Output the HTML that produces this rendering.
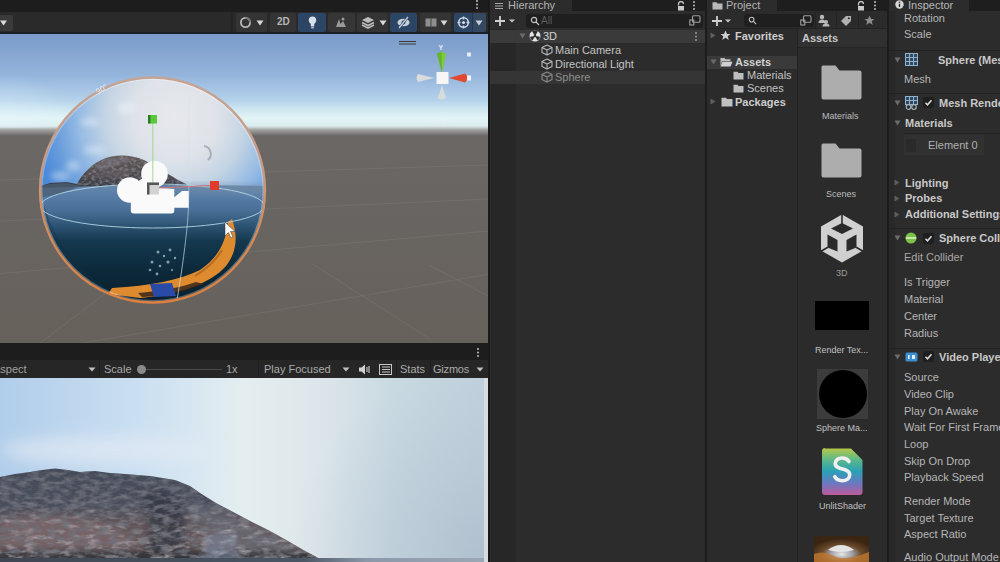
<!DOCTYPE html>
<html><head><meta charset="utf-8">
<style>
*{margin:0;padding:0;box-sizing:border-box}
html,body{width:1000px;height:562px;overflow:hidden;background:#1e1e1e;font-family:"Liberation Sans",sans-serif;color:#c2c2c2}
.a{position:absolute}
.t{position:absolute;white-space:nowrap;font-size:11px;line-height:12px}
.b{font-weight:bold}
</style></head><body>
<!-- ===== SCENE VIEW ===== -->
<div class="a" style="left:0;top:0;width:488px;height:12px;background:#1d1d1d"></div>
<div class="a" style="left:0;top:12px;width:488px;height:21px;background:#2a2a2a"></div>
<div class="a" style="left:0;top:32px;width:488px;height:2px;background:#1b2028"></div>
<svg class="a" style="left:0;top:34px" width="488" height="309" viewBox="0 34 488 309">
<defs>
<linearGradient id="sky" x1="0" y1="34" x2="0" y2="140" gradientUnits="userSpaceOnUse">
<stop offset="0" stop-color="#7a9ac8"/>
<stop offset="0.387" stop-color="#94b4dc"/>
<stop offset="0.623" stop-color="#b4d2ea"/>
<stop offset="0.717" stop-color="#d0e8f2"/>
<stop offset="0.792" stop-color="#e2f4f6"/>
<stop offset="0.868" stop-color="#dcecee"/>
<stop offset="0.906" stop-color="#a0a09f"/>
<stop offset="0.962" stop-color="#6a6765"/>
<stop offset="1" stop-color="#6a6765"/>
</linearGradient>
<linearGradient id="gnd" x1="0" y1="138" x2="0" y2="343" gradientUnits="userSpaceOnUse">
<stop offset="0" stop-color="#6a6765"/>
<stop offset="1" stop-color="#66615b"/>
</linearGradient>
</defs>
<rect x="0" y="34" width="488" height="309" fill="url(#gnd)"/>
<rect x="0" y="34" width="488" height="106" fill="url(#sky)"/>
<radialGradient id="skyl" cx="0" cy="118" r="75" gradientTransform="translate(0 118) scale(1 0.6) translate(0 -118)" gradientUnits="userSpaceOnUse"><stop offset="0" stop-color="#e8f8ff" stop-opacity="0.4"/><stop offset="1" stop-color="#e8f8ff" stop-opacity="0"/></radialGradient><rect x="0" y="34" width="120" height="94" fill="url(#skyl)"/>

<!-- grid lines -->
<g stroke="#9a9690" stroke-width="1" opacity="0.2" fill="none">
<path d="M0 273.5 L490 231"/><path d="M0 357 L490 274"/><path d="M0 221 L490 199"/>
<path d="M312 263.7 L429.5 338.6"/><path d="M429 265 L490 297"/><path d="M0 180 L490 165"/>
<path d="M40 343 L110 290"/>
</g>
<!-- orientation gizmo -->
<path d="M399 41.5h17M399 44h17" stroke="#3a3a3a" stroke-width="1"/>
<path d="M442 73 L437 54 Q441.5 50 446 54Z" fill="#7ccc38"/>
<path d="M442 73 L437 54 Q440 51.5 441.5 51.5Z" fill="#5aa028" opacity="0.6"/>
<text x="438.5" y="50" font-family="Liberation Sans" font-size="7" font-weight="bold" fill="#e6eef8">Y</text>
<path d="M449 78 L465 73.5 Q470 78 465 82.5Z" fill="#e04a30"/>
<rect x="467" y="75.5" width="4" height="5" fill="#f4f4f4"/>
<path d="M434 78 L418 74 Q415 78 418 82Z" fill="#d8dcdc"/>
<path d="M442 85 L438 98 Q442 101 446 98Z" fill="#dadcdc"/>
<rect x="436.5" y="72" width="12" height="12" fill="#f6f6f6"/>
<rect x="467" y="52.5" width="4" height="4" fill="#e4ecf4"/>
<text x="428" y="123" font-family="Liberation Sans" font-size="8" fill="#f0f4f6" opacity="0.5">Persp</text>

<defs>
<clipPath id="sc"><circle cx="152.5" cy="190" r="112"/></clipPath>
<linearGradient id="ssky" x1="0" y1="78" x2="0" y2="185" gradientUnits="userSpaceOnUse">
<stop offset="0" stop-color="#c8d8ea"/><stop offset="0.5" stop-color="#b8cce0"/><stop offset="1" stop-color="#aec4da"/>
</linearGradient>
<radialGradient id="sglow" cx="178" cy="112" r="78" gradientUnits="userSpaceOnUse">
<stop offset="0" stop-color="#e4e6ea"/><stop offset="0.4" stop-color="#dfe2e8" stop-opacity="0.95"/><stop offset="0.75" stop-color="#d0d8e2" stop-opacity="0.55"/><stop offset="1" stop-color="#c8d4e0" stop-opacity="0"/>
</radialGradient>
<radialGradient id="sleft" cx="78" cy="150" r="62" gradientUnits="userSpaceOnUse">
<stop offset="0" stop-color="#5a98e0"/><stop offset="0.6" stop-color="#6aa4e0" stop-opacity="0.7"/><stop offset="1" stop-color="#8ab8e4" stop-opacity="0"/>
</radialGradient>
<linearGradient id="ssea" x1="0" y1="184" x2="0" y2="302" gradientUnits="userSpaceOnUse">
<stop offset="0" stop-color="#6a88a8"/><stop offset="0.08" stop-color="#5a80aa"/><stop offset="0.22" stop-color="#4a7098"/><stop offset="0.36" stop-color="#2c5272"/><stop offset="0.48" stop-color="#14394f"/><stop offset="0.75" stop-color="#0c2838"/><stop offset="1" stop-color="#0a2030"/>
</linearGradient>
<linearGradient id="sisl" x1="0" y1="155" x2="0" y2="186" gradientUnits="userSpaceOnUse">
<stop offset="0" stop-color="#625a5a"/><stop offset="0.6" stop-color="#4e4a4e"/><stop offset="1" stop-color="#3a3e48"/>
</linearGradient>
<radialGradient id="rimg" cx="152.5" cy="190" r="112" gradientUnits="userSpaceOnUse">
<stop offset="0.9" stop-color="#000" stop-opacity="0"/><stop offset="1" stop-color="#0a1a2a" stop-opacity="0.35"/>
</radialGradient>
</defs>
<g clip-path="url(#sc)">
<radialGradient id="svig" cx="175" cy="118" r="140" gradientUnits="userSpaceOnUse"><stop offset="0" stop-color="#e6e8ec"/><stop offset="0.3" stop-color="#dfe3e9"/><stop offset="0.5" stop-color="#c4d4e4"/><stop offset="0.68" stop-color="#98bce4"/><stop offset="0.85" stop-color="#6a9edc"/><stop offset="1" stop-color="#4a88d8"/></radialGradient>
<rect x="38" y="76" width="230" height="230" fill="url(#svig)"/>
<g fill="#f0f6fc" opacity="0.45" filter="url(#blr2)"><ellipse cx="126" cy="108" rx="9" ry="6"/><ellipse cx="90" cy="122" rx="10" ry="4"/><ellipse cx="73" cy="166" rx="7" ry="5"/><ellipse cx="60" cy="176" rx="10" ry="4"/><ellipse cx="95" cy="150" rx="12" ry="4"/></g>
<path d="M204 146 a8 8 0 0 1 4 14" fill="none" stroke="#8a9098" stroke-width="2" opacity="0.6"/>
<path d="M38 187 L50 183 L66 182 L77 184 C82 174 92 163 106 158 C118 154 132 155 144 160 C156 166 168 174 178 180 L186 184 L190 190 L38 195Z" fill="url(#sisl)"/>
<path d="M77 184 C82 174 92 163 106 158 C118 154 132 155 144 160 C156 166 168 174 178 180 L186 184 L190 190 L70 190Z" filter="url(#noise3)" opacity="0.5"/>
<path d="M94 165 L108 158 L124 157 L136 159 L120 164 L100 172Z" fill="#7a7680" opacity="0.5" filter="url(#blr1)"/>
<path d="M85 178 L110 170 L140 168 L120 178Z" fill="#6a646a" opacity="0.45" filter="url(#blr1)"/>
<path d="M38 188 Q150 183 268 186 V306 H38Z" fill="url(#ssea)"/>
<path d="M175 184 Q220 183 268 186 L268 196 Q220 192 175 192Z" fill="#7890a8" opacity="0.45" filter="url(#blr2)"/>
<path d="M38 186 L50 184 L66 183 L80 186 L60 194 L38 198Z" fill="#4a5e72" opacity="0.8"/>
<path d="M44 205 Q60 260 110 290 L60 306 L38 306Z" fill="#143048" opacity="0.35"/>
<g fill="#d8e8f0" opacity="0.6" filter="url(#blr05)"><circle cx="158" cy="252" r="1.5"/><circle cx="164" cy="256" r="1.2"/><circle cx="170" cy="250" r="1.4"/><circle cx="152" cy="262" r="1.5"/><circle cx="160" cy="266" r="1.3"/><circle cx="168" cy="262" r="1.6"/><circle cx="175" cy="258" r="1.2"/><circle cx="150" cy="270" r="1.3"/><circle cx="157" cy="274" r="1.4"/><circle cx="172" cy="270" r="1.1"/></g>
<path d="M232 219 C238 236 237 252 226 266 C210 284 180 294 140 298 L108 294 L112 288 C150 286 180 280 200 270 C218 258 226 242 228 222Z" fill="#de8a2e"/>
<path d="M222 250 C215 262 205 270 195 276" stroke="#9a5a20" stroke-width="2" fill="none" opacity="0.6"/>
<path d="M196 282 C180 288 160 291 138 293 L142 297 C165 296 185 291 204 284Z" fill="#3a2418" opacity="0.85"/>
<path d="M150 284 L172 283 L176 296 L154 297Z" fill="#2a4aa8"/>
<path d="M60 302 L108 294 L112 300 L150 303 L60 312Z" fill="#1a2430"/>
</g>
<ellipse cx="152.5" cy="206" rx="112" ry="22" fill="none" stroke="#b8dcea" stroke-width="1" opacity="0.85"/>
<linearGradient id="merg" x1="0" y1="80" x2="0" y2="300" gradientUnits="userSpaceOnUse"><stop offset="0" stop-color="#c8e0e8" stop-opacity="0"/><stop offset="0.3" stop-color="#c8e0e8" stop-opacity="0.5"/><stop offset="1" stop-color="#c8e0e8" stop-opacity="0.75"/></linearGradient><path d="M188.5 80 C189 150 190 200 187 228 C184 256 181 276 177 300" fill="none" stroke="url(#merg)" stroke-width="1"/>
<linearGradient id="rimst" x1="0" y1="77" x2="0" y2="303" gradientUnits="userSpaceOnUse"><stop offset="0" stop-color="#c4a494"/><stop offset="0.4" stop-color="#c89a80"/><stop offset="0.7" stop-color="#d48c58"/><stop offset="1" stop-color="#dc8040"/></linearGradient><circle cx="152.5" cy="190" r="110.8" fill="none" stroke="#ffffff" stroke-width="1.6" opacity="0.3"/><circle cx="152.5" cy="190" r="112.5" fill="none" stroke="url(#rimst)" stroke-width="2.4" filter="url(#blr05)"/>
<text x="95" y="92" transform="rotate(-30 101 88)" font-family="Liberation Sans" font-size="8" fill="#f0f0f0" opacity="0.8">90°</text>
<!-- camera -->
<g fill="#fafafa">
<circle cx="154.5" cy="174" r="13.3"/>
<circle cx="129.8" cy="190" r="12.8"/>
<path d="M131 186 L143 178 L152 187.5 L174.3 189 V210.5 Q174.3 213.5 171.3 213.5 H133.8 Q130.8 213.5 130.8 210.5Z"/>
<path d="M174 197.5 L182 191 H188.7 V207.7 H174Z"/>
</g>
<path d="M152.8 123 V183" stroke="#90d880" stroke-width="1.1" opacity="0.8"/>
<path d="M159 188 L211 185.5" stroke="#e87070" stroke-width="1.1" opacity="0.85"/>
<rect x="148" y="115" width="9" height="8.5" fill="#58c83a"/><rect x="148" y="115" width="2.5" height="8.5" fill="#2e7a20"/>
<rect x="210" y="181" width="9" height="9" fill="#e03a2a"/>
<rect x="147" y="182.5" width="12" height="12" fill="#d2d2d2"/><path d="M147 182.5 H159 V185 H149.5 V194.5 H147Z" fill="#555"/>
<!-- cursor -->
<path d="M225 222 L225 236 L228.5 232.5 L231 238 L233 237 L230.5 231.5 L235 231.5Z" fill="#fff" stroke="#333" stroke-width="0.5"/>
</svg>

<!-- ===== GAME VIEW ===== -->
<div class="a" style="left:0;top:343px;width:488px;height:17px;background:#1d1d1d"></div>
<div class="a" style="left:0;top:360px;width:488px;height:18px;background:#262626"></div>
<svg class="a" style="left:0;top:378px" width="488" height="184" viewBox="0 378 488 184">
<defs>
<linearGradient id="gsky" x1="0" y1="378" x2="488" y2="378" gradientUnits="userSpaceOnUse">
<stop offset="0" stop-color="#b0cdea"/><stop offset="0.3" stop-color="#cce0f2"/><stop offset="0.5" stop-color="#e4eef0"/><stop offset="0.65" stop-color="#dde6ea"/><stop offset="0.8" stop-color="#cadae2"/><stop offset="1" stop-color="#c0d0dc"/>
</linearGradient>
<radialGradient id="gdark" cx="488" cy="562" r="200" gradientUnits="userSpaceOnUse">
<stop offset="0" stop-color="#a8b8c8" stop-opacity="0.7"/><stop offset="1" stop-color="#b0c0d0" stop-opacity="0"/>
</radialGradient>
<filter id="blr" x="-50%" y="-300%" width="200%" height="700%"><feGaussianBlur stdDeviation="8"/></filter>
<filter id="blr2" x="-20%" y="-20%" width="140%" height="140%"><feGaussianBlur stdDeviation="3"/></filter>
<filter id="noise3" x="0" y="0" width="100%" height="100%"><feTurbulence type="fractalNoise" baseFrequency="0.25 0.35" numOctaves="2" seed="5"/><feColorMatrix values="0 0 0 0 0.55  0 0 0 0 0.52  0 0 0 0 0.54  0 0 0 2.2 -0.9"/><feComposite in2="SourceGraphic" operator="in"/></filter>
<filter id="blr05" x="-5%" y="-5%" width="110%" height="110%"><feGaussianBlur stdDeviation="0.5"/></filter>
<filter id="blr1" x="-20%" y="-20%" width="140%" height="140%"><feGaussianBlur stdDeviation="1.2"/></filter>
<linearGradient id="ghill" x1="0" y1="468" x2="0" y2="560" gradientUnits="userSpaceOnUse">
<stop offset="0" stop-color="#444a58"/><stop offset="0.4" stop-color="#4a4e5c"/><stop offset="0.62" stop-color="#62565a"/><stop offset="0.9" stop-color="#66585a"/><stop offset="1" stop-color="#343640"/>
</linearGradient>
<filter id="noise" x="0" y="0" width="100%" height="100%"><feTurbulence type="fractalNoise" baseFrequency="0.08 0.2" numOctaves="3" seed="7"/><feColorMatrix values="0 0 0 0 0.62  0 0 0 0 0.58  0 0 0 0 0.6  0 0 0 2.0 -0.95"/></filter>
<filter id="noise2" x="0" y="0" width="100%" height="100%"><feTurbulence type="fractalNoise" baseFrequency="0.1 0.22" numOctaves="3" seed="19"/><feColorMatrix values="0 0 0 0 0.16  0 0 0 0 0.17  0 0 0 0 0.2  0 0 0 2.4 -1.0"/></filter>
<clipPath id="hillc"><path d="M0 477 L15 474 L30 472 L42 470 L55 468.5 L68 470 L80 472 L95 471 L110 473 L125 474 L150 476 L175 480 L190 486 L200 493 L216 503 L235 513 L252 522 L270 531 L288 541 L305 551 L318 558 L324 562 H0Z"/></clipPath>
<linearGradient id="hmg" x1="0" y1="470" x2="0" y2="555" gradientUnits="userSpaceOnUse"><stop offset="0" stop-color="#222"/><stop offset="0.5" stop-color="#888"/><stop offset="1" stop-color="#eee"/></linearGradient>
<mask id="hm" maskUnits="userSpaceOnUse" x="0" y="465" width="350" height="97"><rect x="0" y="465" width="350" height="97" fill="url(#hmg)"/></mask>
</defs>
<rect x="0" y="378" width="488" height="184" fill="url(#gsky)"/>
<rect x="0" y="378" width="488" height="184" fill="url(#gdark)"/>
<ellipse cx="110" cy="450" rx="110" ry="14" fill="#e2eaf4" opacity="0.7" filter="url(#blr)"/>
<g clip-path="url(#hillc)">
<rect x="0" y="465" width="350" height="97" fill="url(#ghill)"/>
<g filter="url(#blr2)">
<path d="M0 522 C30 512 70 515 110 525 C125 530 135 540 140 556 L0 556Z" fill="#7c6a6c" opacity="0.7"/>
<path d="M140 492 C155 488 172 492 182 502 L186 548 L145 552 C152 530 150 510 140 492Z" fill="#30343e" opacity="0.7"/>
<path d="M190 500 C215 510 260 530 300 550 L250 556 C230 540 205 525 190 515Z" fill="#6a707c" opacity="0.55"/>
<path d="M0 549 L350 551 V562 H0Z" fill="#2e3036" opacity="0.8"/>
</g>
<rect x="0" y="465" width="350" height="97" filter="url(#noise)" mask="url(#hm)"/>
<rect x="0" y="465" width="350" height="97" filter="url(#noise2)"/>
</g>
<path d="M204 536 C210 532 230 532 236 538 V562 H204Z" fill="#8898b4" opacity="0.45" filter="url(#blr2)"/>
<linearGradient id="seab" x1="0" y1="0" x2="488" y2="0" gradientUnits="userSpaceOnUse"><stop offset="0" stop-color="#3e4652"/><stop offset="0.62" stop-color="#4a5664"/><stop offset="0.75" stop-color="#8a98a8"/><stop offset="1" stop-color="#9aa8b6"/></linearGradient><rect x="0" y="558" width="484" height="4" fill="url(#seab)"/>
<rect x="484" y="378" width="4" height="184" fill="#d6dce2"/>
</svg>


<!-- scene top bar dots -->
<svg class="a" style="left:475px;top:-1px" width="4" height="11" viewBox="0 0 4 11"><circle cx="2" cy="2" r="1" fill="#c0c0c0"/><circle cx="2" cy="5.5" r="1" fill="#c0c0c0"/><circle cx="2" cy="9" r="1" fill="#c0c0c0"/></svg>
<!-- scene toolbar -->
<div class="a" style="left:0;top:15px;width:13px;height:16px;background:#3a3a3a;border-radius:0 2px 2px 0"></div>
<svg class="a" style="left:0;top:20px" width="8" height="6" viewBox="0 0 8 6"><path d="M0 0.5h7l-3.5 5z" fill="#dcdcdc"/></svg>
<div class="a" style="left:231px;top:13px;width:2px;height:19px;background:#242424"></div>
<div class="a" style="left:236px;top:13px;width:31px;height:19px;background:#343434;border-radius:2px"></div>
<svg class="a" style="left:239px;top:16px" width="13" height="13" viewBox="0 0 13 13"><circle cx="6.5" cy="6.5" r="4.6" fill="none" stroke="#b8b8b8" stroke-width="1.8"/><path d="M6.5 1.9a4.6 4.6 0 0 1 4.6 4.6" fill="none" stroke="#777" stroke-width="1.8"/></svg>
<svg class="a" style="left:256px;top:20px" width="8" height="6" viewBox="0 0 8 6"><path d="M0.5 0.5h7l-3.5 5z" fill="#d8d8d8"/></svg>
<div class="a" style="left:270px;top:13px;width:26px;height:19px;background:#343434;border-radius:2px"></div>
<div class="t b" style="left:277px;top:16px;color:#b4b4b4;font-size:10px;font-weight:bold">2D</div>
<div class="a" style="left:298px;top:13px;width:28px;height:19px;background:#2c4565;border-radius:2px"></div>
<svg class="a" style="left:308px;top:16px" width="9" height="13" viewBox="0 0 9 13"><circle cx="4.5" cy="4.2" r="3.7" fill="#d8e0ea"/><rect x="2.8" y="7" width="3.4" height="3.5" fill="#d8e0ea"/><rect x="3.2" y="11" width="2.6" height="1.5" fill="#b0b8c0"/></svg>
<div class="a" style="left:328px;top:13px;width:27px;height:19px;background:#363636;border-radius:2px"></div>
<svg class="a" style="left:334px;top:16px" width="14" height="13" viewBox="0 0 14 13"><path d="M2 11 L5 3 L6.5 8 L9 5 L12 11Z" fill="#9a9a9a"/><circle cx="9" cy="3" r="1.5" fill="#9a9a9a"/></svg>
<div class="a" style="left:357px;top:13px;width:31px;height:19px;background:#343434;border-radius:2px"></div>
<svg class="a" style="left:361px;top:16px" width="14" height="13" viewBox="0 0 14 13"><path d="M7 1L13 4L7 7L1 4Z" fill="#bcbcbc"/><path d="M1 6.5L7 9.5L13 6.5" fill="none" stroke="#bcbcbc" stroke-width="1.6"/><path d="M1 9L7 12L13 9" fill="none" stroke="#bcbcbc" stroke-width="1.6"/></svg>
<svg class="a" style="left:379px;top:20px" width="8" height="6" viewBox="0 0 8 6"><path d="M0.5 0.5h7l-3.5 5z" fill="#d8d8d8"/></svg>
<div class="a" style="left:390px;top:13px;width:27px;height:19px;background:#2c4565;border-radius:2px"></div>
<svg class="a" style="left:396px;top:16px" width="15" height="13" viewBox="0 0 15 13"><ellipse cx="7.5" cy="6.5" rx="6" ry="3.8" fill="#c8d0dc"/><circle cx="7.5" cy="6.5" r="2" fill="#2c4565"/><path d="M3 12L12 1" stroke="#2c4565" stroke-width="2.4"/><path d="M3 12L12 1" stroke="#c8d0dc" stroke-width="1.2"/></svg>
<div class="a" style="left:420px;top:13px;width:31px;height:19px;background:#343434;border-radius:2px"></div>
<svg class="a" style="left:425px;top:18px" width="12" height="9" viewBox="0 0 12 9"><rect x="0.5" y="0.5" width="11" height="8" fill="#8e8e8e"/><path d="M6 0.5v8" stroke="#343434" stroke-width="0.8"/></svg>
<svg class="a" style="left:440px;top:20px" width="8" height="6" viewBox="0 0 8 6"><path d="M0.5 0.5h7l-3.5 5z" fill="#d8d8d8"/></svg>
<div class="a" style="left:454px;top:13px;width:32px;height:19px;background:#2c4565;border-radius:2px"></div>
<div class="a" style="left:472px;top:13px;width:1px;height:19px;background:#22364f"></div><div class="a" style="left:473px;top:13px;width:13px;height:19px;background:#34495f;border-radius:0 2px 2px 0"></div>
<svg class="a" style="left:457px;top:16px" width="13" height="13" viewBox="0 0 13 13"><circle cx="6.5" cy="6.5" r="4.8" fill="none" stroke="#d0d8e2" stroke-width="1.5"/><path d="M0.5 6.5h3M9.5 6.5h3M6.5 0.5v3M6.5 9.5v3" stroke="#d0d8e2" stroke-width="1.4"/><circle cx="6.5" cy="6.5" r="1.6" fill="#d0d8e2"/></svg>
<svg class="a" style="left:475px;top:20px" width="8" height="6" viewBox="0 0 8 6"><path d="M0.5 0.5h7l-3.5 5z" fill="#c8d0d8"/></svg>

<!-- game top bar -->
<svg class="a" style="left:476px;top:347px" width="4" height="11" viewBox="0 0 4 11"><circle cx="2" cy="2" r="1" fill="#c0c0c0"/><circle cx="2" cy="5.5" r="1" fill="#c0c0c0"/><circle cx="2" cy="9" r="1" fill="#c0c0c0"/></svg>
<div class="t" style="left:-7px;top:363px;color:#a0a0a0">Aspect</div>
<svg class="a" style="left:88px;top:367px" width="8" height="5" viewBox="0 0 8 5"><path d="M0.5 0.5h7l-3.5 4z" fill="#c0c0c0"/></svg>
<div class="a" style="left:99px;top:361px;width:1px;height:16px;background:#1e1e1e"></div>
<div class="t" style="left:104px;top:363px;color:#a8a8a8">Scale</div>
<div class="a" style="left:144px;top:369px;width:78px;height:1px;background:#4a4a4a"></div>
<div class="a" style="left:137px;top:365px;width:9px;height:9px;background:#8a8a8a;border-radius:50%"></div>
<div class="t" style="left:226px;top:363px;color:#a8a8a8">1x</div>
<div class="a" style="left:258px;top:361px;width:1px;height:16px;background:#1e1e1e"></div>
<div class="t" style="left:264px;top:363px;color:#ababab">Play Focused</div>
<svg class="a" style="left:342px;top:367px" width="8" height="5" viewBox="0 0 8 5"><path d="M0.5 0.5h7l-3.5 4z" fill="#c0c0c0"/></svg>
<svg class="a" style="left:358px;top:364px" width="12" height="11" viewBox="0 0 12 11"><path d="M1 3.5h2.5L7 0.5v10L3.5 7.5H1z" fill="#d0d0d0"/><path d="M9 3v5M11 2v7" stroke="#d0d0d0" stroke-width="1.1"/></svg>
<svg class="a" style="left:379px;top:364px" width="13" height="11" viewBox="0 0 13 11"><rect x="0.5" y="0.5" width="12" height="10" fill="none" stroke="#c8c8c8" stroke-width="1"/><path d="M3 3h8M3 5.5h8M3 8h8" stroke="#c8c8c8" stroke-width="1"/></svg>
<div class="a" style="left:396px;top:361px;width:1px;height:16px;background:#1e1e1e"></div>
<div class="t" style="left:400px;top:363px;color:#ababab">Stats</div>
<div class="a" style="left:430px;top:361px;width:1px;height:16px;background:#1e1e1e"></div>
<div class="t" style="left:433px;top:363px;color:#ababab;letter-spacing:-0.2px">Gizmos</div>
<svg class="a" style="left:476px;top:367px" width="8" height="5" viewBox="0 0 8 5"><path d="M0.5 0.5h7l-3.5 4z" fill="#c0c0c0"/></svg>
<!-- divider -->
<div class="a" style="left:488px;top:0;width:2px;height:562px;background:#1a1a1a"></div>

<!-- ===== HIERARCHY ===== -->
<div class="a" style="left:490px;top:0;width:216px;height:562px;background:#2c2c2c"></div>
<div class="a" style="left:490px;top:0;width:216px;height:11px;background:#1e1e1e"></div>
<div class="a" style="left:490px;top:0;width:82px;height:11px;background:#2c2c2c"></div>
<div class="a" style="left:490px;top:11px;width:216px;height:18px;background:#2c2c2c"></div>
<div class="a" style="left:491px;top:29px;width:25px;height:533px;background:#272727"></div>
<div class="a" style="left:490px;top:30px;width:215px;height:13px;background:#3a3a3a"></div>
<div class="a" style="left:490px;top:71px;width:215px;height:13px;background:#353535"></div>


<!-- hierarchy content -->
<svg class="a" style="left:494px;top:2px" width="10" height="8" viewBox="0 0 10 8"><path d="M1 1.5h8M1 4h8M1 6.5h8" stroke="#a8a8a8" stroke-width="1.2"/></svg>
<div class="t" style="left:508px;top:-1px;color:#b4b4b4">Hierarchy</div>
<svg class="a" style="left:676px;top:1px" width="10" height="10" viewBox="0 0 10 10"><path d="M2.5 4.5V3a2.5 2.5 0 0 1 5 0" fill="none" stroke="#c8c8c8" stroke-width="1.3"/><rect x="2" y="5" width="6" height="4.5" fill="#c8c8c8"/></svg>
<svg class="a" style="left:692px;top:0" width="4" height="11" viewBox="0 0 4 11"><circle cx="2" cy="2" r="1" fill="#bbb"/><circle cx="2" cy="5.5" r="1" fill="#bbb"/><circle cx="2" cy="9" r="1" fill="#bbb"/></svg>
<svg class="a" style="left:494px;top:15px" width="24" height="12" viewBox="0 0 24 12"><path d="M1 6h10M6 1v10" stroke="#d0d0d0" stroke-width="1.8"/><path d="M15 4.5h6l-3 3z" fill="#c8c8c8"/></svg>
<div class="a" style="left:526px;top:14px;width:177px;height:14px;background:#1f1f1f;border-radius:3px"></div>
<svg class="a" style="left:530px;top:16px" width="10" height="10" viewBox="0 0 10 10"><circle cx="4" cy="4" r="2.6" fill="none" stroke="#c0c0c0" stroke-width="1.2"/><path d="M6 6l3 3" stroke="#c0c0c0" stroke-width="1.3"/></svg>
<div class="t" style="left:541px;top:15px;color:#5d5d5d;font-size:10px">All</div>
<svg class="a" style="left:689px;top:15px" width="12" height="11" viewBox="0 0 12 11"><rect x="3.5" y="0.8" width="7.5" height="6.5" rx="1" fill="none" stroke="#a0a0a0" stroke-width="1.1"/><rect x="0.8" y="5" width="4" height="5" fill="none" stroke="#a0a0a0" stroke-width="1.1"/></svg>
<svg class="a" style="left:519px;top:33px" width="7" height="6" viewBox="0 0 7 6"><path d="M0.5 0.5h6l-3 5z" fill="#6a6a6a"/></svg>
<svg class="a" style="left:529px;top:30px" width="12" height="12" viewBox="0 0 12 12"><circle cx="6" cy="6" r="5.5" fill="#e4e4e4"/><path d="M6 6L3.2 1.5A5 5 0 0 1 8.8 1.5Z M6 6L11 6.8A5 5 0 0 1 8.5 10.6Z M6 6L3.5 10.6A5 5 0 0 1 1 6.8Z" fill="#2c2c2c"/><circle cx="6" cy="6" r="1.3" fill="#2c2c2c"/></svg>
<div class="t b" style="left:543px;top:30px;color:#d4d4d4;font-size:11px;font-weight:normal">3D</div>
<svg class="a" style="left:694px;top:31px" width="4" height="11" viewBox="0 0 4 11"><circle cx="2" cy="2" r="1" fill="#9a9a9a"/><circle cx="2" cy="5.5" r="1" fill="#9a9a9a"/><circle cx="2" cy="9" r="1" fill="#9a9a9a"/></svg>
<svg class="a" style="left:541px;top:44px" width="12" height="12" viewBox="0 0 12 12"><path d="M6 1L11 3.5V8.5L6 11L1 8.5V3.5Z M1 3.5L6 6L11 3.5 M6 6V11" fill="none" stroke="#b8b8b8" stroke-width="1.1" stroke-linejoin="round"/></svg><div class="t" style="left:555px;top:44px;color:#c4c4c4">Main Camera</div>
<svg class="a" style="left:541px;top:58px" width="12" height="12" viewBox="0 0 12 12"><path d="M6 1L11 3.5V8.5L6 11L1 8.5V3.5Z M1 3.5L6 6L11 3.5 M6 6V11" fill="none" stroke="#b8b8b8" stroke-width="1.1" stroke-linejoin="round"/></svg><div class="t" style="left:555px;top:58px;color:#c4c4c4">Directional Light</div>
<svg class="a" style="left:541px;top:71px" width="12" height="12" viewBox="0 0 12 12"><path d="M6 1L11 3.5V8.5L6 11L1 8.5V3.5Z M1 3.5L6 6L11 3.5 M6 6V11" fill="none" stroke="#8a8a8a" stroke-width="1.1" stroke-linejoin="round"/></svg><div class="t" style="left:555px;top:71px;color:#8e8e8e">Sphere</div>
<!-- divider -->
<div class="a" style="left:705px;top:0;width:2px;height:562px;background:#1c1c1c"></div>

<!-- ===== PROJECT ===== -->
<div class="a" style="left:707px;top:0;width:181px;height:562px;background:#2b2b2b"></div>
<div class="a" style="left:707px;top:0;width:181px;height:11px;background:#1e1e1e"></div>
<div class="a" style="left:707px;top:0;width:70px;height:11px;background:#2c2c2c"></div>


<!-- project content -->
<svg class="a" style="left:712px;top:1px" width="11" height="9" viewBox="0 0 11 9"><path d="M0.5 1.2h4l1 1.2h5v6.1h-10z" fill="#b8b8b8"/></svg>
<div class="t" style="left:726px;top:-1px;color:#b4b4b4">Project</div>
<svg class="a" style="left:856px;top:1px" width="10" height="10" viewBox="0 0 10 10"><path d="M2.5 4.5V3a2.5 2.5 0 0 1 5 0" fill="none" stroke="#c8c8c8" stroke-width="1.3"/><rect x="2" y="5" width="6" height="4.5" fill="#c8c8c8"/></svg>
<svg class="a" style="left:873px;top:0" width="4" height="11" viewBox="0 0 4 11"><circle cx="2" cy="2" r="1" fill="#bbb"/><circle cx="2" cy="5.5" r="1" fill="#bbb"/><circle cx="2" cy="9" r="1" fill="#bbb"/></svg>
<svg class="a" style="left:711px;top:15px" width="24" height="12" viewBox="0 0 24 12"><path d="M1 6h10M6 1v10" stroke="#d0d0d0" stroke-width="1.8"/><path d="M14 4.5h6l-3 3z" fill="#c8c8c8"/></svg>
<div class="a" style="left:744px;top:14px;width:70px;height:13px;background:#1f1f1f;border-radius:3px"></div>
<svg class="a" style="left:748px;top:16px" width="9" height="9" viewBox="0 0 10 10"><circle cx="4" cy="4" r="2.6" fill="none" stroke="#c0c0c0" stroke-width="1.2"/><path d="M6 6l3 3" stroke="#c0c0c0" stroke-width="1.3"/></svg>
<svg class="a" style="left:800px;top:15px" width="12" height="11" viewBox="0 0 12 11"><rect x="3.5" y="0.8" width="7.5" height="6.5" rx="1" fill="none" stroke="#a0a0a0" stroke-width="1.1"/><rect x="0.8" y="5" width="4" height="5" fill="none" stroke="#a0a0a0" stroke-width="1.1"/></svg>
<div class="a" style="left:815px;top:12px;width:1px;height:16px;background:#232323"></div>
<svg class="a" style="left:818px;top:14px" width="12" height="13" viewBox="0 0 12 13"><circle cx="4" cy="3" r="2.2" fill="#b8b8b8"/><path d="M0.5 9a3.5 3.5 0 0 1 7 0z" fill="#b8b8b8"/><circle cx="8" cy="8" r="2" fill="#b8b8b8"/><path d="M4.5 12.5a3.5 3 0 0 1 7 0z" fill="#b8b8b8"/></svg>
<div class="a" style="left:836px;top:12px;width:1px;height:16px;background:#232323"></div>
<svg class="a" style="left:841px;top:15px" width="11" height="11" viewBox="0 0 11 11"><path d="M5 1H10V6L5 11L0 6Z" fill="#b0b0b0" transform="rotate(0)"/><circle cx="7.8" cy="3.2" r="1" fill="#2b2b2b"/></svg>
<div class="a" style="left:858px;top:12px;width:1px;height:16px;background:#232323"></div>
<svg class="a" style="left:864px;top:15px" width="11" height="11" viewBox="0 0 11 11"><path d="M5.5 0.5L7 4H10.5L7.7 6.2L8.8 10L5.5 7.7L2.2 10L3.3 6.2L0.5 4H4Z" fill="#8e8e8e"/></svg>

<div class="a" style="left:707px;top:28px;width:181px;height:1px;background:#232323"></div>
<!-- left tree -->
<svg class="a" style="left:710px;top:32px" width="6" height="7" viewBox="0 0 6 7"><path d="M0.5 0.5v6l5-3z" fill="#5e5e5e"/></svg>
<svg class="a" style="left:720px;top:30px" width="11" height="11" viewBox="0 0 11 11"><path d="M5.5 0.5L7 4H10.5L7.7 6.2L8.8 10L5.5 7.7L2.2 10L3.3 6.2L0.5 4H4Z" fill="#cfcfcf"/></svg>
<div class="t b" style="left:735px;top:30px;color:#cdcdcd">Favorites</div>
<div class="a" style="left:707px;top:56px;width:90px;height:13px;background:#3a3a3a"></div>
<svg class="a" style="left:710px;top:59px" width="7" height="6" viewBox="0 0 7 6"><path d="M0.5 0.5h6l-3 5z" fill="#6a6a6a"/></svg>
<svg class="a" style="left:720px;top:57px" width="13" height="10" viewBox="0 0 13 10"><path d="M0.5 1h4l1 1.2h5v2h-8.5l-1.5 5z" fill="#c0c0c0"/><path d="M2.5 4.8h10l-2 4.7h-10z" fill="#d0d0d0"/></svg>
<div class="t b" style="left:735px;top:56px;color:#d2d2d2">Assets</div>
<svg class="a" style="left:733px;top:71px" width="11" height="9" viewBox="0 0 11 9"><path d="M0.5 0.8h4l1 1.2h5v6.5h-10z" fill="#bdbdbd"/></svg>
<div class="t" style="left:747px;top:69px;color:#c4c4c4">Materials</div>
<svg class="a" style="left:733px;top:84px" width="11" height="9" viewBox="0 0 11 9"><path d="M0.5 0.8h4l1 1.2h5v6.5h-10z" fill="#bdbdbd"/></svg>
<div class="t" style="left:747px;top:82px;color:#c4c4c4">Scenes</div>
<svg class="a" style="left:710px;top:98px" width="6" height="7" viewBox="0 0 6 7"><path d="M0.5 0.5v6l5-3z" fill="#5e5e5e"/></svg>
<svg class="a" style="left:721px;top:97px" width="12" height="10" viewBox="0 0 12 10"><path d="M0.5 0.8h4.5l1 1.3h5.5v7.4h-11z" fill="#c0c0c0"/></svg>
<div class="t b" style="left:735px;top:96px;color:#cdcdcd">Packages</div>

<div class="a" style="left:797px;top:29px;width:1px;height:533px;background:#222"></div>
<div class="a" style="left:798px;top:29px;width:90px;height:18px;background:#303030"></div>
<div class="t b" style="left:802px;top:32px;color:#c6c6c6">Assets</div>
<div class="a" style="left:798px;top:47px;width:90px;height:1px;background:#252525"></div>
<svg class="a" style="left:821px;top:65px" width="41" height="35" viewBox="0 0 41 35"><path d="M2 0.5h12.5l4 5h20a2 2 0 0 1 2 2v25a2 2 0 0 1-2 2h-36a2 2 0 0 1-2-2v-30.5a1.5 1.5 0 0 1 1.5-1.5z" fill="#adadad"/></svg><div class="t" style="left:822px;top:111px;color:#bdbdbd;font-size:9px;line-height:10px">Materials</div>
<svg class="a" style="left:821px;top:143px" width="41" height="35" viewBox="0 0 41 35"><path d="M2 0.5h12.5l4 5h20a2 2 0 0 1 2 2v25a2 2 0 0 1-2 2h-36a2 2 0 0 1-2-2v-30.5a1.5 1.5 0 0 1 1.5-1.5z" fill="#adadad"/></svg><div class="t" style="left:826px;top:189px;color:#bdbdbd;font-size:9px;line-height:10px">Scenes</div>
<svg class="a" style="left:820px;top:214px" width="44" height="49" viewBox="0 0 44 49"><path d="M22 0.5L43 12.5V36.5L22 48.5L1 36.5V12.5Z" fill="#d0d0d0"/>
<g fill="#2a2a2a"><path d="M22 9L33 14.5L22 20L11 14.5Z"/><path d="M21.2 0V10h1.6V0z"/><path d="M7.5 20.5L17.5 26V37.5L7.5 33.5Z"/><path d="M26.5 26L36.5 20.5V33.5L26.5 37.5Z"/><path d="M0.5 36.5L7.5 32.6L8.3 34L1.3 38Z"/><path d="M43.5 36.5L36.5 32.6L35.7 34L42.7 38Z"/></g></svg>
<div class="t" style="left:836px;top:268px;color:#9a9a9a;font-size:9px;line-height:10px">3D</div>
<div class="a" style="left:815px;top:301px;width:54px;height:29px;background:#000"></div>
<div class="t" style="left:815px;top:345px;color:#c0c0c0;font-size:9px;line-height:10px">Render Tex...</div>
<div class="a" style="left:817px;top:369px;width:51px;height:50px;background:#3c3c3c"></div>
<div class="a" style="left:819px;top:370px;width:48px;height:48px;background:#000;border-radius:50%"></div>
<div class="t" style="left:816px;top:423px;color:#c0c0c0;font-size:9px;line-height:10px">Sphere Ma...</div>
<svg class="a" style="left:822px;top:448px" width="41" height="48" viewBox="0 0 41 48">
<defs><linearGradient id="shg" x1="0" y1="0" x2="0" y2="1"><stop offset="0" stop-color="#b8c848"/><stop offset="0.25" stop-color="#5cb88a"/><stop offset="0.5" stop-color="#2aa0b8"/><stop offset="0.75" stop-color="#6a78c0"/><stop offset="1" stop-color="#c05a9a"/></linearGradient></defs>
<path d="M3 0.5h26l11.5 11.5v32a3 3 0 0 1-3 3h-34.5a3 3 0 0 1-3-3v-41a3 3 0 0 1 3-3z" fill="url(#shg)"/>
<path d="M27 13.5c-1.5-2.5-4-3.5-6.8-3.5c-4 0-7 2.2-7 5.5c0 7.2 14.5 4 14.5 11.2c0 3.5-3.2 6-7.5 6c-3.2 0-6-1.3-7.5-4" fill="none" stroke="#f0f0f0" stroke-width="3.6" stroke-linecap="round"/>
</svg>
<div class="t" style="left:819px;top:501px;color:#c0c0c0;font-size:9px;line-height:10px">UnlitShader</div>
<svg class="a" style="left:814px;top:536px" width="55" height="26" viewBox="0 0 55 26">
<defs><radialGradient id="vt" cx="0.5" cy="0.7" r="0.6"><stop offset="0" stop-color="#e8e8e8"/><stop offset="0.35" stop-color="#9a9aa0"/><stop offset="0.6" stop-color="#6a4a2a"/><stop offset="1" stop-color="#3a2412"/></radialGradient></defs>
<rect width="55" height="26" fill="url(#vt)"/>
<path d="M0 18 Q10 14 20 20 T55 16 V26 H0z" fill="#c07830" opacity="0.8"/>
<path d="M14 14 Q27 4 40 14 Q27 18 14 14z" fill="#e4e4e4"/>
</svg>
<!-- divider -->
<div class="a" style="left:887px;top:0;width:2px;height:562px;background:#1c1c1c"></div>

<!-- ===== INSPECTOR ===== -->
<div class="a" style="left:889px;top:0;width:111px;height:562px;background:#2c2c2c"></div><div class="a" style="left:889px;top:11px;width:6px;height:551px;background:#282828"></div>
<div class="a" style="left:889px;top:0;width:111px;height:11px;background:#1e1e1e"></div>
<div class="a" style="left:889px;top:0;width:80px;height:11px;background:#2c2c2c"></div>


<!-- inspector content -->
<svg class="a" style="left:895px;top:0px" width="9" height="9" viewBox="0 0 9 9"><circle cx="4.5" cy="4.5" r="4.2" fill="#d8d8d8"/><path d="M4.5 3.8v3.2" stroke="#2c2c2c" stroke-width="1.4"/><circle cx="4.5" cy="2.3" r="0.8" fill="#2c2c2c"/></svg>
<div class="t" style="left:908px;top:-1px;color:#b8b8b8">Inspector</div>
<div class="t" style="left:904px;top:12px;color:#b6b6b6">Rotation</div>
<div class="t" style="left:904px;top:28px;color:#b6b6b6">Scale</div>
<div class="a" style="left:889px;top:50px;width:111px;height:1px;background:#222"></div>
<svg class="a" style="left:894px;top:57px" width="7" height="6" viewBox="0 0 7 6"><path d="M0.5 0.5h6l-3 5z" fill="#6a6a6a"/></svg><svg class="a" style="left:905px;top:53px" width="13" height="13" viewBox="0 0 13 13"><rect x="0.5" y="0.5" width="12" height="12" fill="#34485a"/><path d="M0.5 4.5h12M0.5 8.5h12M4.5 0.5v12M8.5 0.5v12" stroke="#8cb4d4" stroke-width="1"/><rect x="0.5" y="0.5" width="12" height="12" fill="none" stroke="#8cb4d4" stroke-width="1"/></svg><div class="t b" style="left:938px;top:54px;color:#c8c8c8">Sphere (Mesh Filter)</div>
<div class="t" style="left:904px;top:73px;color:#b6b6b6">Mesh</div>
<div class="a" style="left:889px;top:93px;width:111px;height:1px;background:#222"></div>
<svg class="a" style="left:894px;top:100px" width="7" height="6" viewBox="0 0 7 6"><path d="M0.5 0.5h6l-3 5z" fill="#6a6a6a"/></svg><svg class="a" style="left:905px;top:96px" width="13" height="14" viewBox="0 0 13 14"><rect x="0.5" y="0.5" width="12" height="8" fill="#34485a"/><path d="M0.5 4.5h12M4.5 0.5v8M8.5 0.5v8" stroke="#8cb4d4"/><rect x="0.5" y="0.5" width="12" height="8" fill="none" stroke="#8cb4d4"/><circle cx="3.5" cy="11" r="2.3" fill="none" stroke="#a0b0bc" stroke-width="1.2"/><circle cx="9" cy="11" r="2.3" fill="none" stroke="#a0b0bc" stroke-width="1.2"/></svg><div class="a" style="left:923px;top:97px;width:11px;height:11px;background:#1f1f1f;border-radius:2px"></div><svg class="a" style="left:923px;top:97px" width="11" height="11" viewBox="0 0 11 11"><path d="M2.5 5.8L4.5 7.8L8.5 3.2" fill="none" stroke="#e0e0e0" stroke-width="1.5"/></svg><div class="t b" style="left:939px;top:97px;color:#c8c8c8">Mesh Renderer</div>
<svg class="a" style="left:894px;top:120px" width="7" height="6" viewBox="0 0 7 6"><path d="M0.5 0.5h6l-3 5z" fill="#6a6a6a"/></svg><div class="t b" style="left:905px;top:117px;color:#c8c8c8">Materials</div>
<div class="a" style="left:904px;top:133px;width:96px;height:1px;background:#242424"></div><div class="a" style="left:904px;top:135px;width:80px;height:20px;background:#313131"></div><div class="a" style="left:906px;top:139px;width:10px;height:13px;background:#2a2a2a"></div>
<div class="t" style="left:928px;top:139px;color:#b0b0b0">Element 0</div>
<svg class="a" style="left:894px;top:179px" width="6" height="7" viewBox="0 0 6 7"><path d="M0.5 0.5v6l5-3z" fill="#5e5e5e"/></svg><div class="t b" style="left:905px;top:177px;color:#c8c8c8">Lighting</div>
<svg class="a" style="left:894px;top:195px" width="6" height="7" viewBox="0 0 6 7"><path d="M0.5 0.5v6l5-3z" fill="#5e5e5e"/></svg><div class="t b" style="left:905px;top:192px;color:#c8c8c8">Probes</div>
<svg class="a" style="left:894px;top:211px" width="6" height="7" viewBox="0 0 6 7"><path d="M0.5 0.5v6l5-3z" fill="#5e5e5e"/></svg><div class="t b" style="left:905px;top:208px;color:#c8c8c8">Additional Settings</div>
<div class="a" style="left:889px;top:228px;width:111px;height:1px;background:#222"></div>
<svg class="a" style="left:894px;top:235px" width="7" height="6" viewBox="0 0 7 6"><path d="M0.5 0.5h6l-3 5z" fill="#6a6a6a"/></svg><svg class="a" style="left:905px;top:232px" width="12" height="12" viewBox="0 0 12 12"><circle cx="6" cy="6" r="5.5" fill="#7cc24a"/><path d="M0.8 6h10.4" stroke="#d8f0c0" stroke-width="1.6"/></svg><div class="a" style="left:923px;top:233px;width:11px;height:11px;background:#1f1f1f;border-radius:2px"></div><svg class="a" style="left:923px;top:233px" width="11" height="11" viewBox="0 0 11 11"><path d="M2.5 5.8L4.5 7.8L8.5 3.2" fill="none" stroke="#e0e0e0" stroke-width="1.5"/></svg><div class="t b" style="left:939px;top:232px;color:#c8c8c8">Sphere Collider</div>
<div class="t" style="left:904px;top:251px;color:#a8a8a8">Edit Collider</div>
<div class="t" style="left:904px;top:276px;color:#b6b6b6">Is Trigger</div>
<div class="t" style="left:904px;top:293px;color:#b6b6b6">Material</div>
<div class="t" style="left:904px;top:310px;color:#b6b6b6">Center</div>
<div class="t" style="left:904px;top:327px;color:#b6b6b6">Radius</div>
<div class="a" style="left:889px;top:348px;width:111px;height:1px;background:#222"></div>
<svg class="a" style="left:894px;top:354px" width="7" height="6" viewBox="0 0 7 6"><path d="M0.5 0.5h6l-3 5z" fill="#6a6a6a"/></svg><svg class="a" style="left:905px;top:352px" width="13" height="10" viewBox="0 0 13 10"><rect x="0.5" y="0.5" width="12" height="9" rx="1.5" fill="#3b8fd0"/><rect x="3" y="3" width="1.6" height="4" fill="#e0f0ff"/><rect x="7" y="3" width="3" height="4" fill="#e0f0ff"/></svg><div class="a" style="left:923px;top:351px;width:11px;height:11px;background:#1f1f1f;border-radius:2px"></div><svg class="a" style="left:923px;top:351px" width="11" height="11" viewBox="0 0 11 11"><path d="M2.5 5.8L4.5 7.8L8.5 3.2" fill="none" stroke="#e0e0e0" stroke-width="1.5"/></svg><div class="t b" style="left:939px;top:351px;color:#c8c8c8">Video Player</div>
<div class="t" style="left:904px;top:371px;color:#b6b6b6">Source</div>
<div class="t" style="left:904px;top:388px;color:#b6b6b6">Video Clip</div>
<div class="t" style="left:904px;top:405px;color:#b6b6b6">Play On Awake</div>
<div class="t" style="left:904px;top:421px;color:#b6b6b6">Wait For First Frame</div>
<div class="t" style="left:904px;top:438px;color:#b6b6b6">Loop</div>
<div class="t" style="left:904px;top:455px;color:#b6b6b6">Skip On Drop</div>
<div class="t" style="left:904px;top:471px;color:#b6b6b6">Playback Speed</div>
<div class="t" style="left:904px;top:495px;color:#b6b6b6">Render Mode</div>
<div class="t" style="left:904px;top:512px;color:#b6b6b6">Target Texture</div>
<div class="t" style="left:904px;top:528px;color:#b6b6b6">Aspect Ratio</div>
<div class="t" style="left:904px;top:551px;color:#b6b6b6">Audio Output Mode</div>
</body></html>
